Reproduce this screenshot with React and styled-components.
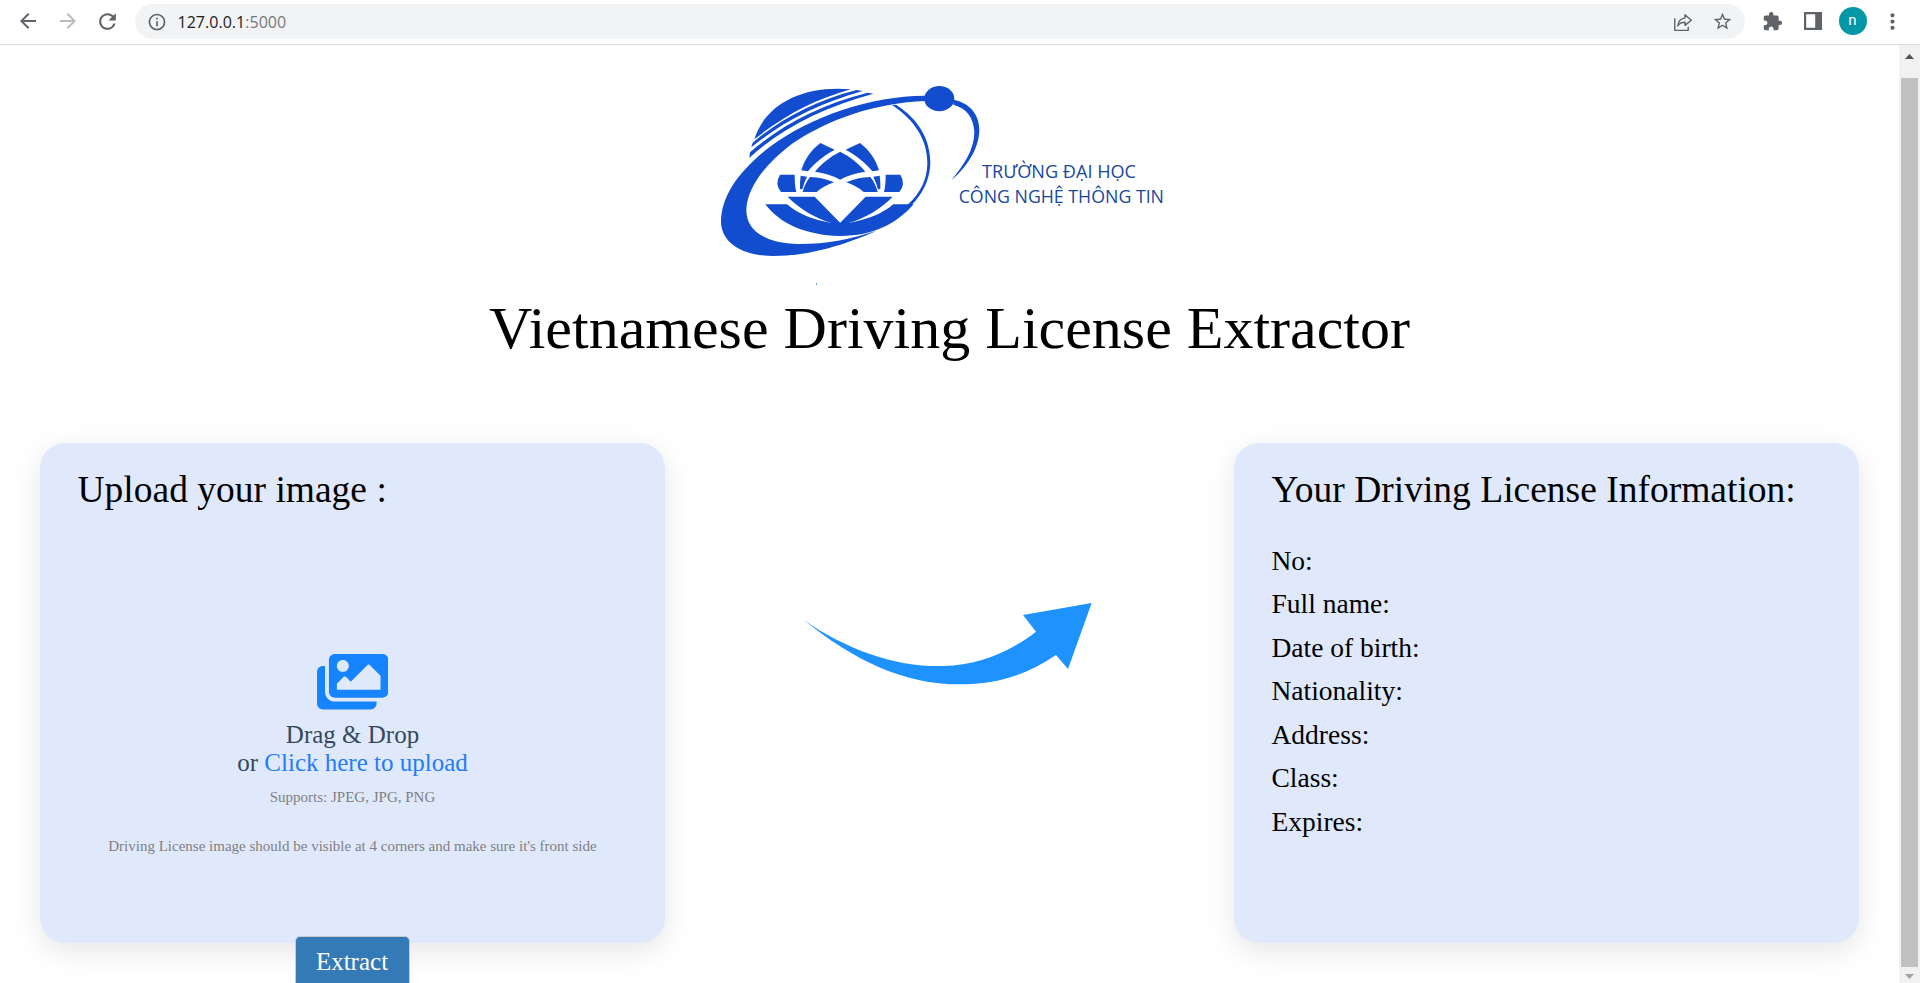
import React from "react";
import styled, { createGlobalStyle } from "styled-components";
import {
  MdArrowBack,
  MdArrowForward,
  MdRefresh,
  MdInfoOutline,
  MdStarBorder,
  MdExtension,
  MdMoreVert,
} from "react-icons/md";
import { FaImages } from "react-icons/fa";

const GlobalStyle = createGlobalStyle`
  * { box-sizing: border-box; }
  body {
    margin: 0;
    background: #fff;
    overflow: hidden;
    font-family: "Liberation Serif", "Times New Roman", serif;
    color: #000;
  }
`;

const Window = styled.div`
  display: flex;
  flex-direction: column;
  width: 100vw;
  height: 100vh;
  overflow: hidden;
`;

const Toolbar = styled.header`
  display: flex;
  align-items: center;
  flex: none;
  height: 45px;
  padding: 0 7.5px 2px;
  border-bottom: 1px solid #dadcde;
  background: #fff;
`;

const ToolButton = styled.span`
  display: flex;
  align-items: center;
  justify-content: center;
  width: 40px;
  height: 35px;
  color: ${(p) => (p.$muted ? "#babcbe" : "#5f6368")};
`;

const AddressBar = styled.div`
  display: flex;
  align-items: center;
  flex: 1;
  height: 35px;
  margin: 1px 7.5px 0;
  padding: 0 2.5px 0 12px;
  border-radius: 18px;
  background: #f1f3f4;
  color: #5f6368;
`;

const Url = styled.span`
  flex: 1;
  margin-left: 10.5px;
  font: 16px/22px "Open Sans", sans-serif;
  letter-spacing: 0.03px;
  color: #75797d;

  b {
    font-weight: 400;
    color: #202124;
  }
`;

const Avatar = styled.span`
  width: 28px;
  height: 28px;
  border-radius: 50%;
  background: #0097a7;
  color: #fff;
  font: 15px/27px Roboto, sans-serif;
  text-align: center;
`;

const Viewport = styled.div`
  display: flex;
  flex: 1;
  min-height: 0;
`;

const Page = styled.main`
  display: flex;
  flex-direction: column;
  align-items: center;
  flex: 1;
  overflow: hidden;
  padding-top: 25px;
`;

const Scrollbar = styled.div`
  display: flex;
  flex-direction: column;
  align-items: center;
  width: 21px;
  padding: 9px 0 4px;
  background: #f1f1f1;
`;

const ScrollArrow = styled.svg`
  display: block;
  width: 9px;
  height: 5px;
  fill: ${(p) => (p.$dim ? "#a3a3a3" : "#505050")};
`;

const Thumb = styled.div`
  flex: 1;
  width: 17px;
  margin: 19px 0 7px;
  background: #c1c1c1;
`;

const LogoSvg = styled.svg`
  display: block;
  flex: none;
  width: 500px;
  height: 226px;
  margin-left: 1px;
  fill: #124dcf;

  text {
    font: 57px "Open Sans", "Noto Sans", sans-serif;
    fill: #17489f;
  }
`;

const Title = styled.h1`
  flex: none;
  margin: -2px 0 81px;
  font-size: 60px;
  font-weight: 400;
  line-height: 68px;
`;

const Columns = styled.section`
  display: flex;
  justify-content: space-between;
  align-items: flex-start;
  width: 100%;
  padding: 0 40px;
`;

const UploadColumn = styled.div`
  display: flex;
  flex-direction: column;
  align-items: center;
`;

const Card = styled.article`
  width: 625px;
  height: 500px;
  padding: 26px 37.5px;
  border-radius: 25px;
  background: #e0e9fc;
  box-shadow: 0 8px 30px rgba(0, 0, 0, 0.1);
`;

const CardTitle = styled.h2`
  margin: 0;
  font-size: 37.5px;
  font-weight: 400;
  line-height: 41px;
`;

const DropZone = styled.div`
  display: flex;
  flex-direction: column;
  align-items: center;
  margin-top: 140px;

  > svg {
    width: 71.5px;
    height: 63.5px;
    color: #1683ff;
  }
`;

const DropText = styled.p`
  margin: 7.5px 0 13px;
  font-size: 25px;
  line-height: 27.5px;
  text-align: center;
  color: #34495e;
`;

const UploadLink = styled.span`
  color: #1f7cff;
`;

const Note = styled.p`
  margin: 0 0 32px;
  font-size: 15px;
  line-height: 17px;
  white-space: nowrap;
  color: #808080;
`;

const ExtractButton = styled.button`
  width: 115px;
  height: 52px;
  margin: -7px 1px 0 0;
  padding: 0;
  border: 1px solid #ccc;
  border-radius: 5px;
  background: #337ab7;
  color: #fff;
  font: 25px/27.5px "Liberation Serif", serif;
`;

const ArrowSvg = styled.svg`
  display: block;
  width: 340px;
  height: 130px;
  margin-top: 137px;
  fill: #1e93ff;
`;

const Fields = styled.ul`
  margin: 28.5px 0 0;
  padding: 0;
  list-style: none;
  font-size: 27.5px;
  line-height: 43.5px;
`;

const FIELDS = [
  "No:",
  "Full name:",
  "Date of birth:",
  "Nationality:",
  "Address:",
  "Class:",
  "Expires:",
];

const ShareIcon = () => (
  <svg width="20" height="20" viewBox="0 0 20 20" fill="none" stroke="#5f6368" strokeWidth="1.4">
    <path d="M1.8 6.2v12.2h13.4v-3.6" />
    <path d="M12 2.8l6.3 5.4-6.3 5.2v-3.1c-3.2 0-5.5.8-7.2 3.5.5-4.2 2.8-7.3 7.2-7.9z" strokeLinejoin="round" />
  </svg>
);

const PanelIcon = () => (
  <svg width="18" height="18" viewBox="0 0 18 18" fill="#5f6368">
    <path fillRule="evenodd" d="M0 0h18v18H0zM2.2 2.2v13.6h9V2.2z" />
  </svg>
);

/* Half of the lotus emblem; the other half is its mirror image. */
const LotusHalf = () => (
  <>
    <path d="M361 219L404 239C368 259 342 281 324 304L304 301C314 268 334 239 361 219Z" />
    <path d="M240 314H284C284 333 285 350 289 366H243Q223 341 240 314Z" />
    <path d="M302 317L321 320Q312 338 307 358L300 357Q299 337 302 317Z" />
    <path d="M330 321C357 322 380 327 402 337C381 345 364 354 350 366H308C312 350 319 335 330 321Z" />
    <path d="M263 380H344L421 459V472L392 458C343 443 299 417 263 380Z" />
    <path d="M421 245C390 260 364 281 345 305C373 309 400 317 421 329Z" />
  </>
);

const Logo = () => (
  <LogoSvg viewBox="0 0 1500 678">
    <path d="M163 208C195 105 305 45 452 58C345 88 250 138 163 208Z" />
    <path d="M154 232L158 218C240 148 345 92 470 60L488 63C350 102 245 157 154 232Z" />
    <path d="M148 264L150 247C243 166 360 103 503 68L520 71C370 112 246 173 148 264Z" />
    <path d="M676 77C520 76 330 139 209 231C120 300 63 375 63 458C66 520 130 558 220 558C330 558 440 522 530 482C455 506 385 522 295 522C195 520 138 481 139 418C143 350 196 283 275 222C385 147 530 98 676 93Z" />
    <ellipse cx="718" cy="86" rx="45" ry="38" />
    <path d="M760 89C810 99 838 133 838 181C836 239 800 292 754 331C793 284 823 237 823 187C821 143 801 115 760 104Z" />
    <path d="M576 105L588 104C656 148 692 208 691 282C688 333 668 372 633 407L622 405C662 369 681 328 682 281C683 213 646 151 576 105Z" />
    <path d="M196 403H261C298 434 345 451 392 458L421 462L449 458C496 450 544 434 580 403H641C590 461 520 498 420 498C315 496 239 460 196 403Z" />
    <LotusHalf />
    <g transform="translate(841 0) scale(-1 1)">
      <LotusHalf />
    </g>
    <rect x="348" y="639" width="3" height="6" opacity=".6" />
    <text x="846" y="325" textLength="462" lengthAdjust="spacingAndGlyphs">TRƯỜNG ĐẠI HỌC</text>
    <text x="776" y="399" textLength="616" lengthAdjust="spacingAndGlyphs">CÔNG NGHỆ THÔNG TIN</text>
  </LogoSvg>
);

export default function App() {
  return (
    <Window>
      <GlobalStyle />
      <Toolbar>
        <ToolButton><MdArrowBack size={24} /></ToolButton>
        <ToolButton $muted><MdArrowForward size={24} /></ToolButton>
        <ToolButton><MdRefresh size={25} /></ToolButton>
        <AddressBar>
          <MdInfoOutline size={20} />
          <Url><b>127.0.0.1</b>:5000</Url>
          <ToolButton><ShareIcon /></ToolButton>
          <ToolButton><MdStarBorder size={21} /></ToolButton>
        </AddressBar>
        <ToolButton><MdExtension size={21} /></ToolButton>
        <ToolButton><PanelIcon /></ToolButton>
        <ToolButton><Avatar>n</Avatar></ToolButton>
        <ToolButton><MdMoreVert size={25} /></ToolButton>
      </Toolbar>
      <Viewport>
        <Page>
          <Logo />
          <Title>Vietnamese Driving License Extractor</Title>
          <Columns>
            <UploadColumn>
              <Card>
                <CardTitle>Upload your image :</CardTitle>
                <DropZone>
                  <FaImages />
                  <DropText>
                    Drag &amp; Drop
                    <br />
                    or <UploadLink>Click here to upload</UploadLink>
                  </DropText>
                  <Note>Supports: JPEG, JPG, PNG</Note>
                  <Note>Driving License image should be visible at 4 corners and make sure it's front side</Note>
                </DropZone>
              </Card>
              <ExtractButton>Extract</ExtractButton>
            </UploadColumn>
            <ArrowSvg viewBox="0 0 1020 390">
              <path d="M70 119C205 213 355 262 490 258C590 255 680 222 768 155L729 105L935 69L864 267L828 225C740 285 650 313 540 313C370 313 220 240 70 119Z" />
            </ArrowSvg>
            <Card>
              <CardTitle>Your Driving License Information:</CardTitle>
              <Fields>
                {FIELDS.map((f) => (
                  <li key={f}>{f}</li>
                ))}
              </Fields>
            </Card>
          </Columns>
        </Page>
        <Scrollbar>
          <ScrollArrow viewBox="0 0 9 5"><path d="M0 5L4.5 0L9 5Z" /></ScrollArrow>
          <Thumb />
          <ScrollArrow $dim viewBox="0 0 9 5"><path d="M0 0L4.5 5L9 0Z" /></ScrollArrow>
        </Scrollbar>
      </Viewport>
    </Window>
  );
}
